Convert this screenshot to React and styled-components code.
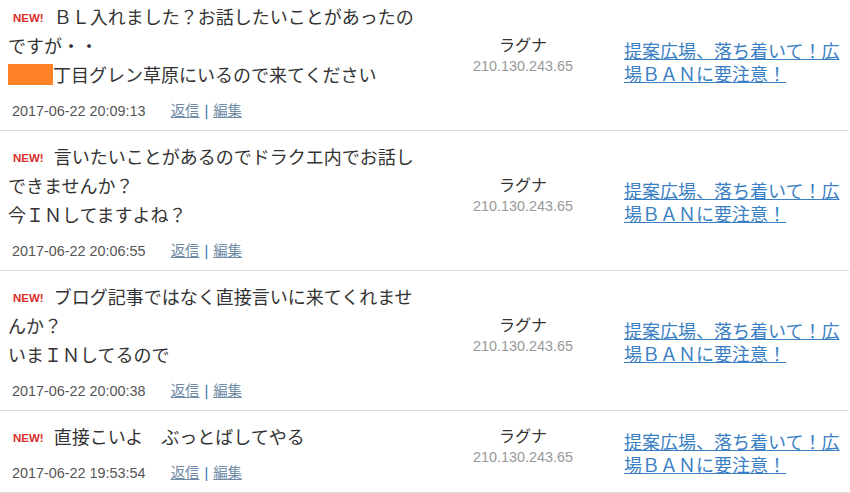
import React from 'react'
import styled, { createGlobalStyle } from 'styled-components'

const Global = createGlobalStyle`
  body {
    margin: 0;
    background: #fff;
    font-family: "Liberation Sans", "Noto Sans CJK JP", sans-serif;
    color: #333;
    overflow: hidden;
  }
`;

const List = styled.div`
  width: 849px;
  margin-top: -9px;
`;

const Row = styled.div`
  display: grid;
  grid-template-columns: 430px 186px 1fr;
  align-items: center;
  border-bottom: 1px solid #dcdcdc;
`;

const Body = styled.div`
  padding: 13px 5px 7px 8px;
`;

const Message = styled.div`
  font-size: 18px;
  line-height: 29px;
  color: #333;
`;

const NewMark = styled.span`
  display: inline-block;
  margin: 0 10px 0 5px;
  font-family: "Liberation Sans", Arial, sans-serif;
  font-size: 11.5px;
  font-weight: bold;
  color: #d9302c;
  vertical-align: 2px;
  line-height: 1;
`;

const Hidden = styled.span`
  display: inline-block;
  width: 45px;
  height: 21px;
  background: #ff8326;
  vertical-align: -3px;
`;

const Meta = styled.div`
  margin-top: 8px;
  padding-left: 4px;
  font-size: 14.4px;
  line-height: 24px;
  color: #555;
  display: flex;
  align-items: center;
`;

const Date = styled.span`
  margin-right: 25px;
`;

const Action = styled.a`
  color: #6f8ba6;
  text-decoration: underline;
  cursor: pointer;
`;

const Sep = styled.span`
  color: #2a72b5;
  margin: 0 5px;
`;

const Author = styled.div`
  text-align: center;
  padding: 0 0 10px;
`;

const Name = styled.div`
  font-size: 16px;
  line-height: 21px;
  color: #333;
`;

const Ip = styled.div`
  font-size: 14.4px;
  line-height: 20px;
  color: #999;
`;

const Topic = styled.div`
  padding: 6px 8px 0 8px;
  width: 220px;
`;

const TopicLink = styled.a`
  font-size: 18px;
  line-height: 23px;
  color: #3a7fc3;
  text-decoration: underline;
  cursor: pointer;
`;

const posts = [
  {
    lines: ['ＢＬ入れました？お話したいことがあったのですが・・', [true, '丁目グレン草原にいるので来てください']],
    date: '2017-06-22 20:09:13',
  },
  {
    lines: ['言いたいことがあるのでドラクエ内でお話しできませんか？', '今ＩＮしてますよね？'],
    date: '2017-06-22 20:06:55',
  },
  {
    lines: ['ブログ記事ではなく直接言いに来てくれませんか？', 'いまＩＮしてるので'],
    date: '2017-06-22 20:00:38',
  },
  {
    lines: ['直接こいよ　ぶっとばしてやる'],
    date: '2017-06-22 19:53:54',
  },
]

const Post = ({ post }) => (
  <Row>
    <Body>
      <Message>
        <NewMark>NEW!</NewMark>
        {post.lines.map((l, i) => (
          <React.Fragment key={i}>
            {i > 0 && <br />}
            {Array.isArray(l) ? (
              <>
                <Hidden />
                {l[1]}
              </>
            ) : (
              l
            )}
          </React.Fragment>
        ))}
      </Message>
      <Meta>
        <Date>{post.date}</Date>
        <Action>返信</Action>
        <Sep>|</Sep>
        <Action>編集</Action>
      </Meta>
    </Body>
    <Author>
      <Name>ラグナ</Name>
      <Ip>210.130.243.65</Ip>
    </Author>
    <Topic>
      <TopicLink>提案広場、落ち着いて！広場ＢＡＮに要注意！</TopicLink>
    </Topic>
  </Row>
)

const App = () => (
  <>
    <Global />
    <List>
      {posts.map((p, i) => (
        <Post key={i} post={p} />
      ))}
    </List>
  </>
)

export default App
